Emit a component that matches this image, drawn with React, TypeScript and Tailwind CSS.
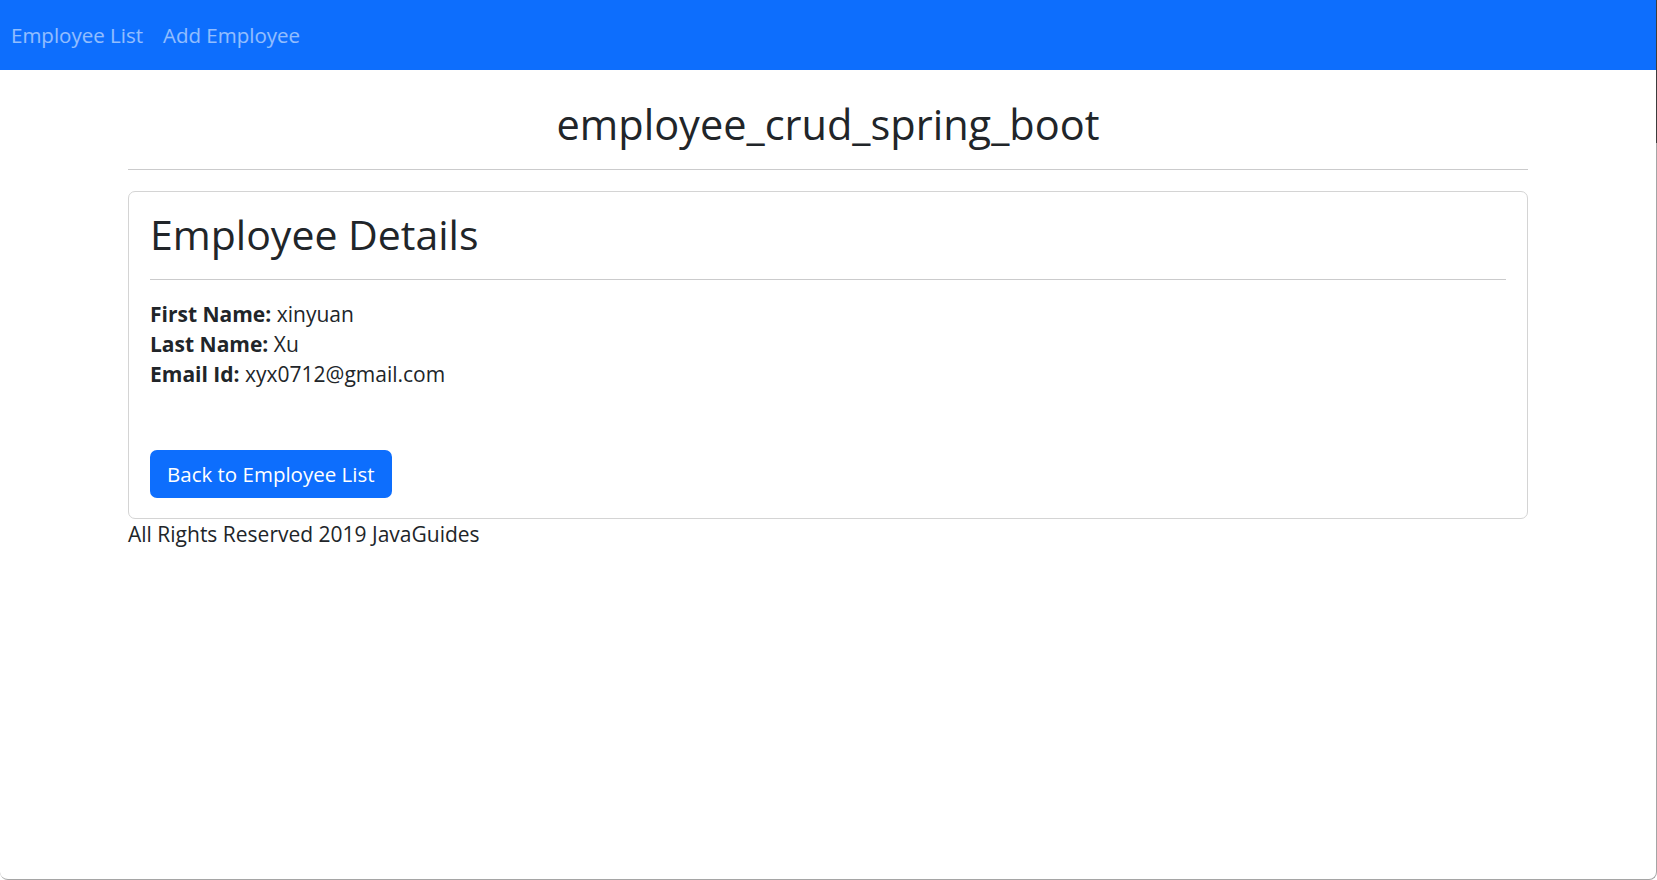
export default function App() {
	const font = { fontFamily: '"Open Sans", "Noto Sans", Arial, sans-serif' }
	return (
		<div style={font} className="relative w-full h-[880px] bg-white text-[#212529] border-r border-b border-[#a5a5a5] rounded-b-[8px]">
			<div className="absolute right-[-1px] top-0 w-px h-[143px] bg-[#3c3c3c]" />

			<nav className="h-[70px] bg-[#0d6efd] flex items-center pl-[11px] gap-[20px] text-[20.5px] text-white/55">
				<a href="#">Employee List</a>
				<a href="#">Add Employee</a>
			</nav>

			<div className="w-[1400px] mx-auto">
				<h2 className="mt-[28px] text-[41.5px] leading-[52px] text-center">employee_crud_spring_boot</h2>
				<hr className="mt-[19px] border-t border-[#cbcbcc]" />

				<div className="mt-[21px] border border-[#d4d4d4] rounded-[7px] px-[21px] pt-[16px] pb-[20px]">
					<h2 className="text-[41px] leading-[52px]">Employee Details</h2>
					<hr className="mt-[19px] border-t border-[#cbcbcc]" />
					<div className="mt-[19px] text-[21px] leading-[30px]">
						<div>
							<span className="font-bold">First Name:</span> xinyuan
						</div>
						<div>
							<span className="font-bold">Last Name:</span> Xu
						</div>
						<div>
							<span className="font-bold">Email Id:</span> xyx0712@gmail.com
						</div>
					</div>
					<button className="mt-[61px] h-[48px] px-[17px] rounded-[7px] bg-[#0d6efd] text-white text-[20.5px]">
						Back to Employee List
					</button>
				</div>

				<div className="text-[21px] leading-[30px]">All Rights Reserved 2019 JavaGuides</div>
			</div>
		</div>
	)
}
